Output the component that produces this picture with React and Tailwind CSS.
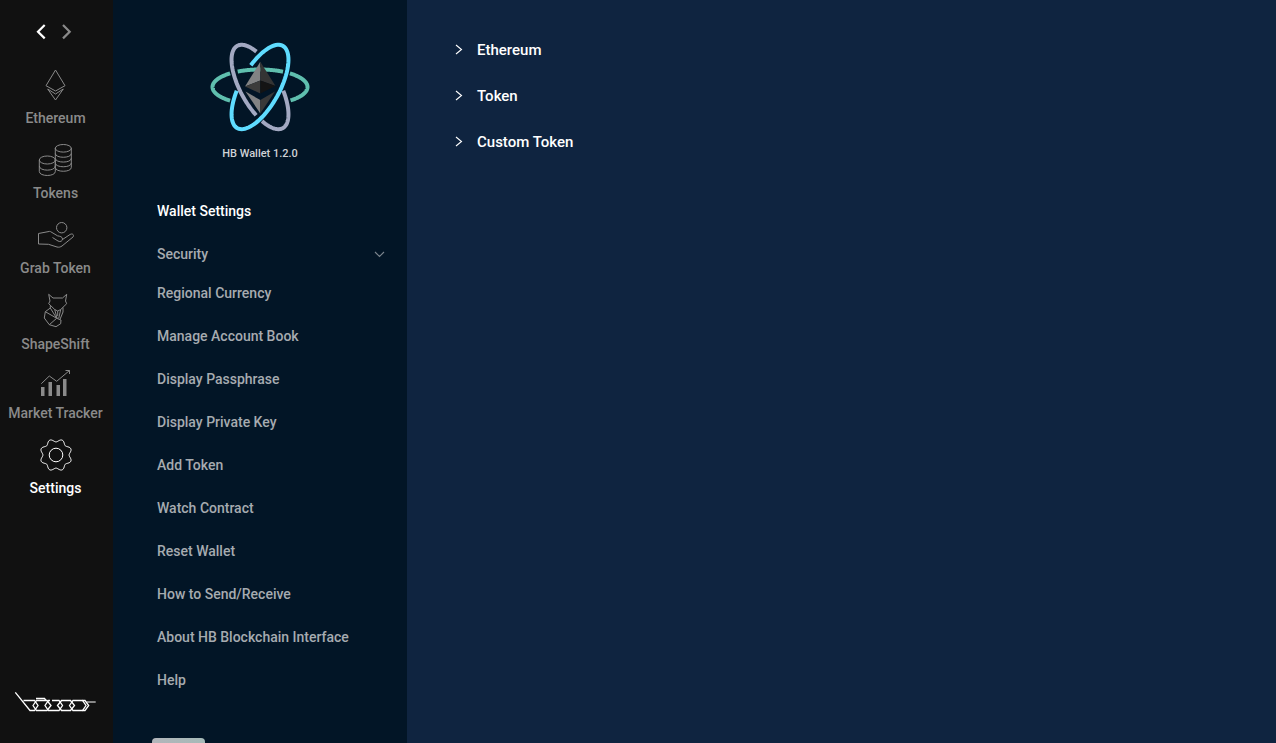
const nav = "flex flex-col items-center text-sm leading-5 font-medium";

function Arc({ cx, cy, a, b, tilt, from, to, color }) {
  const s = Math.sin((tilt * Math.PI) / 180);
  const c = Math.cos((tilt * Math.PI) / 180);
  const pts = [];
  for (let i = 0; i <= 80; i++) {
    const t = ((from + ((to - from) * i) / 80) * Math.PI) / 180;
    const along = a * Math.cos(t);
    const across = b * Math.sin(t);
    pts.push(`${(cx + along * s + across * c).toFixed(2)},${(cy - along * c + across * s).toFixed(2)}`);
  }
  return <polyline points={pts.join(" ")} fill="none" stroke={color} strokeWidth="4" />;
}

function WalletLogo() {
  const o = { cx: 51, cy: 47 };
  return (
    <svg width="102" height="94" viewBox="0 0 102 94" aria-hidden="true">
      <Arc {...o} a={47.5} b={17.5} tilt={90} from={129} to={231} color="#5fbfae" />
      <Arc {...o} a={47.5} b={17.5} tilt={90} from={-118} to={-61} color="#5fbfae" />
      <Arc {...o} a={47.5} b={17.5} tilt={90} from={-51} to={50} color="#5fbfae" />
      <path d="M51.3 21.7 36 46.5 51.3 40.5Z" fill="#828384" />
      <path d="M51.3 21.7 66.5 46 51.3 40.5Z" fill="#343434" />
      <path d="M36 46.5 51.3 40.5V53.5Z" fill="#3c3c3b" />
      <path d="M66.5 46 51.3 40.5V53.5Z" fill="#141414" />
      <path d="M36.5 51.5 51.3 60V73.5Z" fill="#828384" />
      <path d="M66 51.5 51.3 60V73.5Z" fill="#393939" />
      <Arc {...o} a={47} b={19.5} tilt={-29} from={46} to={-119} color="#a3a9c2" />
      <Arc {...o} a={47} b={19.5} tilt={-29} from={-131} to={-252} color="#a3a9c2" />
      <Arc {...o} a={47} b={19.5} tilt={29} from={-72} to={252} color="#5fdcff" />
    </svg>
  );
}

function Icon({ h, children }) {
  return (
    <svg width="41" height={h} viewBox={`0 0 41 ${h}`} fill="none" stroke="currentColor" strokeWidth="1" strokeLinejoin="round" aria-hidden="true">
      {children}
    </svg>
  );
}

const gear = Array.from({ length: 128 }, (_, i) => {
  const t = (i / 128) * 2 * Math.PI;
  const r = 14.6 - 1.5 * Math.cos(8 * t);
  return `${(21 + r * Math.cos(t)).toFixed(2)},${(17 + r * Math.sin(t)).toFixed(2)}`;
}).join(" ");

const items = [
  { label: "Ethereum", h: 40, icon: <path d="M20.5 2 30 17.7 20.5 23 11 17.7ZM12.7 21 20.5 26 28.3 21 20.5 32Z" /> },
  {
    label: "Tokens",
    h: 40,
    icon: (
      <>
        <ellipse cx="28.3" cy="5.3" rx="8" ry="3.8" />
        <path d="M20.3 5V24.5C20.3 29.5 36.3 29.5 36.3 24.5V5M20.3 10.5C20.3 15.5 36.3 15.5 36.3 10.5M20.3 15.3C20.3 20.3 36.3 20.3 36.3 15.3M20.3 20C20.3 25 36.3 25 36.3 20" />
        <ellipse cx="12.3" cy="17" rx="8" ry="4" />
        <path d="M4.3 17V28.5C4.3 33.8 20.3 33.8 20.3 28.5V17M4.3 23C4.3 28.5 20.3 28.5 20.3 23" />
      </>
    ),
  },
  {
    label: "Grab Token",
    h: 40,
    icon: (
      <>
        <circle cx="26.7" cy="9.7" r="5.2" />
        <path d="M17.5 19.5 23 23C25.5 24.3 27.5 23 27.5 21C27.5 18.7 25 18.3 22.5 17.8L15.5 13.6 14.5 13.4 3.5 15.5V26L13.5 26.3 22 29C24 29.5 25.5 29 27 28L38 19C39.5 17 37.5 15 35 16.5L27.5 21.5" />
      </>
    ),
  },
  {
    label: "ShapeShift",
    h: 41,
    icon: (
      <path d="M13.7 1.3 18 5H27.5L31.7 1.3 30.5 8 31.7 10.7 25.7 16.5 22.7 18 19.7 16.5 13.7 10.7 15 8ZM15.3 12.5V15L10.3 18.7 9.3 25 14.3 31.7 21 33.7 25.7 30.7 26 27 21.7 25.3 10.3 18.7M21.7 25.3 14.3 31.7M15.3 15 21.7 25.3M19.7 16.5 22 25M22.7 18V23M25.7 16.5 23.7 25.5M28 14.5V19L25 26.3" />
    ),
  },
  {
    label: "Market Tracker",
    h: 34,
    icon: (
      <>
        <path d="M6 18H9.5V27H6ZM13.5 13H17V27H13.5ZM21.5 16H25V27H21.5ZM28 10H31.5V27H28Z" fill="currentColor" stroke="none" />
        <path d="M6.3 14.7 14.3 7 21.7 12.3 34.5 1.5M30.5 1.5H34.5V5" />
      </>
    ),
  },
  {
    label: "Settings",
    h: 40,
    active: true,
    icon: (
      <>
        <polygon points={gear} />
        <circle cx="21" cy="17" r="6.8" />
      </>
    ),
  },
];

const menu = ["Regional Currency", "Manage Account Book", "Display Passphrase", "Display Private Key", "Add Token", "Watch Contract", "Reset Wallet", "How to Send/Receive", "About HB Blockchain Interface", "Help"];

export default function App() {
  return (
    <div className="flex h-screen overflow-hidden bg-[#0f2440] font-['Roboto',sans-serif]">
      <nav className="flex w-[113px] shrink-0 flex-col bg-[#111111] pr-[2px] text-[#8a8a8a]">
        <div className="flex justify-center gap-3 pt-6 pr-1">
          <button aria-label="Back" className="text-white">
            <svg width="14" height="16" viewBox="0 0 14 16" fill="none" stroke="currentColor" strokeWidth="2.2"><path d="M10.7 1 4 7.7 10.7 14.4" /></svg>
          </button>
          <button aria-label="Forward">
            <svg width="14" height="16" viewBox="0 0 14 16" fill="none" stroke="currentColor" strokeWidth="2.2"><path d="M3 1 9.7 7.7 3 14.4" /></svg>
          </button>
        </div>
        <div className="flex flex-col gap-[15px] pt-7">
          {items.map((it) => (
            <button key={it.label} className={it.active ? `${nav} text-white` : nav}>
              <Icon h={it.h}>{it.icon}</Icon>
              <span className="whitespace-nowrap">{it.label}</span>
            </button>
          ))}
        </div>
        <div className="mt-auto flex justify-center pb-[29px]">
          <svg width="84" height="24" viewBox="0 0 84 24" fill="none" stroke="#ffffff" strokeWidth="1.3" aria-hidden="true">
            <path d="M1.3 2.3 16 20.5H20.5L24 15.5 20.5 10.5H9.5M22 8.5H30.5L32 10.5" />
            <path d="M19 15.5 22.5 10.5H33L37 15.5 33 20.5H22.5Z" />
            <path d="M36 10.5H34.5L31 15.5 34.5 20.5H45L48.5 15.5 45 10.5H38" />
            <path d="M43.5 15.5 47.5 10.5H56.5L60.5 15.5 56.5 20.5H47.5Z" />
            <path d="M55.5 15.5 59 10.5H68.5L72 15.5 68.5 20.5H59Z" />
            <path d="M68.5 10.5H71L74.7 15.5 71 20.5H68.5" />
            <path d="M72.5 12H81.7" strokeWidth="1" />
          </svg>
        </div>
      </nav>
      <aside className="flex w-[294px] shrink-0 flex-col overflow-hidden bg-[#021526] text-sm font-medium text-[#a6abb0]">
        <div className="flex flex-col items-center pt-10">
          <WalletLogo />
          <p className="mt-[10px] text-[11px] leading-5 text-[#d0d3d6]">HB Wallet 1.2.0</p>
        </div>
        <div className="flex flex-col items-stretch gap-[23px] pt-[37px] pr-[22px] pl-11 leading-5">
          <button className="text-left text-white">Wallet Settings</button>
          <div className="flex flex-col gap-[19px]">
            <button className="flex items-center justify-between">
              Security
              <svg className="text-[#7c858e]" width="12" height="12" viewBox="0 0 12 12" fill="none" stroke="currentColor" strokeWidth="1.1" aria-hidden="true"><path d="M2 4 6.5 8.5 11 4" /></svg>
            </button>
            <button className="text-left">{menu[0]}</button>
          </div>
          {menu.slice(1).map((m) => (
            <button key={m} className="text-left">{m}</button>
          ))}
        </div>
        <button aria-label="More" className="mt-12 ml-[39px] h-8 w-[53px] shrink-0 rounded bg-linear-to-r from-[#b2b5ba] to-[#a6bab8]" />
      </aside>
      <main className="flex flex-1 flex-col items-start gap-[26px] pt-10 pl-[47px] text-[15px] leading-5 font-medium text-white">
        {["Ethereum", "Token", "Custom Token"].map((t) => (
          <button key={t} className="flex items-center gap-[13px]">
            <svg width="10" height="12" viewBox="0 0 10 12" fill="none" stroke="currentColor" strokeWidth="1.1" aria-hidden="true"><path d="M2 1 7.5 5.5 2 10" /></svg>
            {t}
          </button>
        ))}
      </main>
    </div>
  );
}
